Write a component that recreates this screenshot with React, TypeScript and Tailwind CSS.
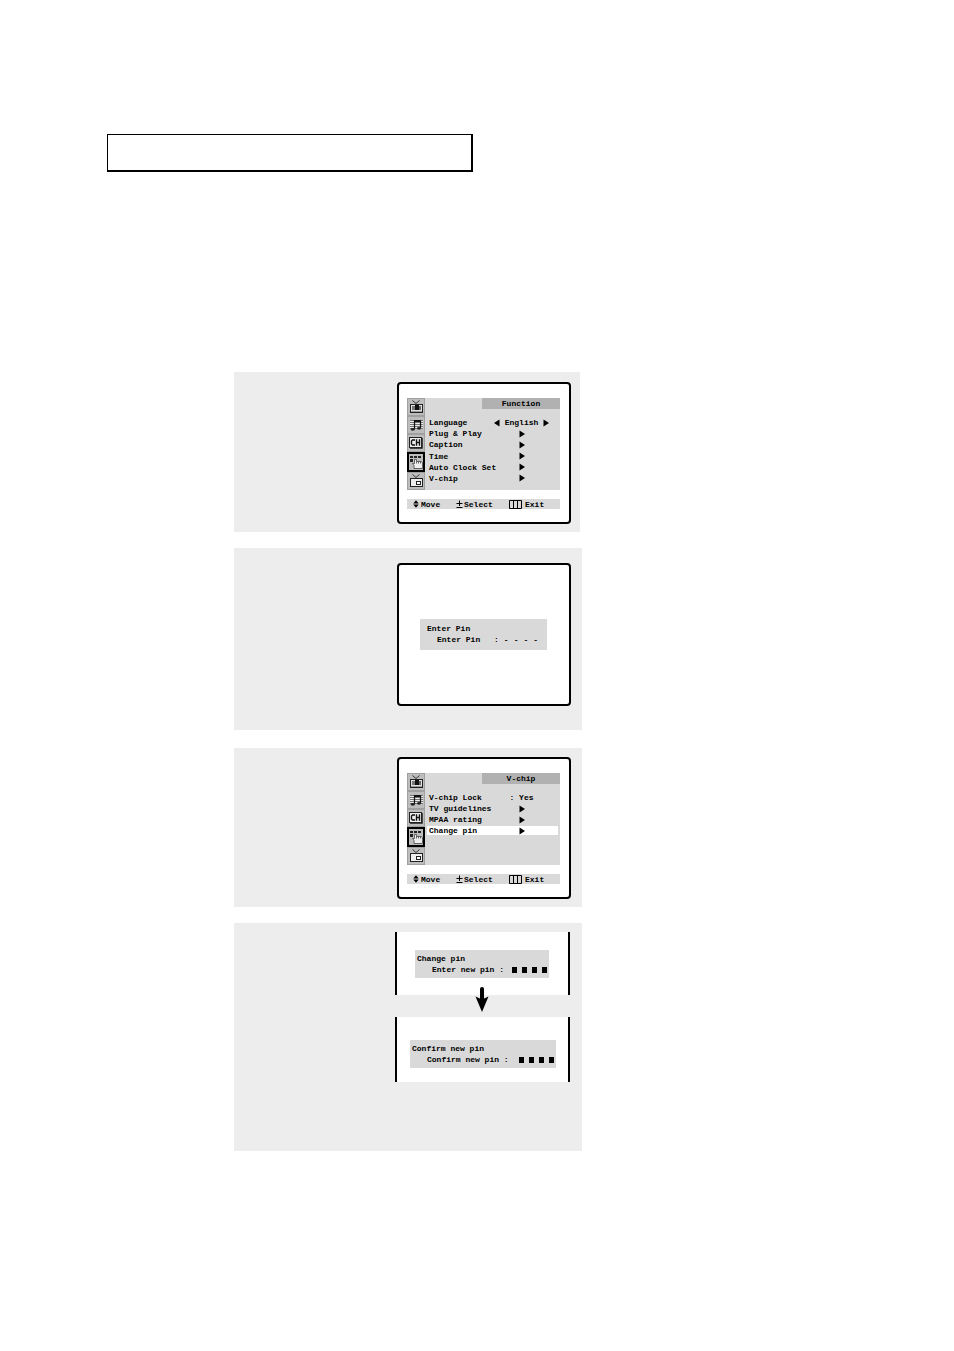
import type { ReactNode } from "react";

const TvIcon = ({ filled = false }: { filled?: boolean }) => (
  <svg viewBox="1 1 16 16" className="block size-full" aria-hidden="true">
    <path d="M5.5 2.5 L9 5.5 L12.5 2.5" fill="none" stroke="#333" strokeWidth="1" />
    {filled ? (
      <>
        <rect x="3" y="6" width="13" height="9" fill="#222" />
        <rect x="4" y="7" width="11" height="7" fill="#e2e2e2" />
        <rect x="5" y="8" width="3" height="4" fill="#777" />
        <rect x="8" y="7" width="4" height="5" fill="#111" />
        <rect x="12" y="8" width="2" height="4" fill="#666" />
        <rect x="4" y="13" width="11" height="1" fill="#999" />
      </>
    ) : (
      <>
        <rect x="3" y="6" width="13" height="9" fill="#222" />
        <rect x="4" y="7" width="11" height="7" fill="#eee" />
        <rect x="9" y="9" width="5" height="4" fill="#222" />
        <rect x="10" y="10" width="3" height="2" fill="#fff" />
      </>
    )}
  </svg>
);

const MusicIcon = () => (
  <svg viewBox="1 1 16 16" className="block size-full" aria-hidden="true">
    <rect x="3" y="4" width="13" height="9" fill="#eee" />
    <path d="M3 4.5 H16 M3 6.5 H16 M3 8.5 H16 M3 10.5 H16 M3 12.5 H16" stroke="#555" strokeWidth="0.8" />
    <path d="M7.5 13 V4.5 H13.5 V12 M7.5 5.5 H13.5" fill="none" stroke="#111" strokeWidth="1.2" />
    <ellipse cx="5.8" cy="13.3" rx="2.2" ry="1.4" fill="#222" />
    <ellipse cx="12" cy="12.3" rx="2" ry="1.4" fill="#222" />
  </svg>
);

const ChannelIcon = () => (
  <svg viewBox="1 1 16 16" className="block size-full" aria-hidden="true">
    <rect x="2.5" y="3.5" width="12" height="10" fill="#eee" stroke="#222" />
    <path d="M15.5 4 V14.5 H3" fill="none" stroke="#444" />
    <path
      d="M8 6 H5.5 L4.5 7 V10 L5.5 11 H8 M9.5 5.3 V11.7 M9.5 8.5 H12.5 M12.5 5.3 V11.7"
      fill="none"
      stroke="#111"
      strokeWidth="1.4"
    />
  </svg>
);

const HandIcon = () => (
  <svg viewBox="2 2 14 14" className="block size-full" aria-hidden="true">
    <path d="M3 3h3v2h-3z M7 3h3v2h-3z M11 3h3v2h-3z M3 6h3v3h-3z" fill="#222" />
    <path
      d="M7 15.5 V12.5 L5.5 10.5 L7.5 10.5 V6.5 H9.5 V8.5 H14 L15.5 9.5 V15.5 Z"
      fill="#eee"
      stroke="#444"
      strokeWidth="0.8"
    />
    <path d="M9.5 8.5 V10.5 M11.5 8.5 V10.5 M13.5 8.5 V10.5" stroke="#444" strokeWidth="0.8" />
  </svg>
);

const ArrowRight = () => (
  <svg viewBox="0 0 6 8" className="block h-2 w-1.5" aria-hidden="true">
    <path d="M0.5 0.5 L6 4 L0.5 7.5 Z" fill="#000" />
  </svg>
);

const ArrowLeft = () => (
  <svg viewBox="0 0 6 8" className="block h-2 w-1.5" aria-hidden="true">
    <path d="M5.5 0.5 L0 4 L5.5 7.5 Z" fill="#000" />
  </svg>
);

const tabs: { label: string; icon: ReactNode; active?: boolean }[] = [
  { label: "Picture", icon: <TvIcon filled /> },
  { label: "Sound", icon: <MusicIcon /> },
  { label: "Channel", icon: <ChannelIcon /> },
  { label: "Function", icon: <HandIcon />, active: true },
  { label: "PIP", icon: <TvIcon /> },
];

const Tabs = () => (
  <nav className="flex w-[18px] shrink-0 flex-col bg-[#b8b8b8]">
    {tabs.map((tab) => (
      <button
        key={tab.label}
        type="button"
        aria-label={tab.label}
        className={
          tab.active
            ? "min-h-0 flex-1 border-2 border-black bg-[#bdbdbd]"
            : "min-h-0 flex-1 border border-[#a0a0a0] bg-[#bdbdbd]"
        }
      >
        {tab.icon}
      </button>
    ))}
  </nav>
);

const Footer = () => (
  <footer className="mt-[9px] flex h-[10px] items-center bg-[#d9d9d9] pl-1.5">
    <span className="flex w-[43px] items-center gap-0.5">
      <svg viewBox="0 0 6 8" className="block h-2 w-1.5" aria-hidden="true">
        <path d="M0.3 3.4 L3 0.3 L5.7 3.4 Z M0.3 4.6 L3 7.7 L5.7 4.6 Z" fill="#000" />
      </svg>
      Move
    </span>
    <span className="flex w-[53px] items-center gap-px">
      <svg viewBox="0 0 7 8" className="block h-2 w-[7px]" aria-hidden="true">
        <path d="M3.5 0.5 V6 M0.5 3.5 H6.5 M0.5 7.5 H6.5" stroke="#000" />
      </svg>
      Select
    </span>
    <span className="flex items-center gap-[3px]">
      <svg viewBox="0 0 13 9" className="block h-[9px] w-[13px]" aria-hidden="true">
        <path d="M0.5 0.5 H12.5 V8.5 H0.5 Z M4.5 0.5 V8.5 M8.5 0.5 V8.5" fill="none" stroke="#000" />
      </svg>
      Exit
    </span>
  </footer>
);

type Item = { label: string; value?: ReactNode; selected?: boolean };

const MenuScreen = ({ title, items, listClass }: { title: string; items: Item[]; listClass: string }) => (
  <div className="h-[142px] w-[174px] rounded-[4px] border-2 border-black bg-white pt-[14px] pr-[9px] pl-2">
    <div className="flex h-[92px] bg-[#d9d9d9]">
      <Tabs />
      <div className="flex flex-1 flex-col">
        <h2 className="ml-auto w-[78px] bg-[#b1b1b1] text-center leading-[11px]">{title}</h2>
        <ul className={listClass}>
          {items.map((item) => (
            <li
              key={item.label}
              className={
                item.selected
                  ? "grid h-[9px] grid-cols-[56px_1fr] items-center bg-white pl-0.5"
                  : "grid h-[9px] grid-cols-[56px_1fr] items-center pl-0.5"
              }
            >
              <button type="button" className="text-left whitespace-nowrap">
                {item.label}
              </button>
              <span className="flex items-center justify-center">{item.value ?? <ArrowRight />}</span>
            </li>
          ))}
        </ul>
      </div>
    </div>
    <Footer />
  </div>
);

const functionItems: Item[] = [
  {
    label: "Language",
    value: (
      <span className="flex items-center gap-[5px]">
        <button type="button" aria-label="Previous language">
          <ArrowLeft />
        </button>
        English
        <button type="button" aria-label="Next language">
          <ArrowRight />
        </button>
      </span>
    ),
  },
  { label: "Plug & Play" },
  { label: "Caption" },
  { label: "Time" },
  { label: "Auto Clock Set" },
  { label: "V-chip" },
];

const chipItems: Item[] = [
  { label: "V-chip Lock", value: ": Yes" },
  { label: "TV guidelines" },
  { label: "MPAA rating" },
  { label: "Change pin", selected: true },
];

const PinDots = () => (
  <span className="flex gap-[5px]">
    {[0, 1, 2, 3].map((n) => (
      <span key={n} className="h-1.5 w-[5px] bg-black" />
    ))}
  </span>
);

type StripProps = { title: string; prompt: string; stripClass: string };

const PinStrip = ({ title, prompt, stripClass }: StripProps) => (
  <div className={stripClass}>
    <div className="h-7 bg-[#d9d9d9] pt-[3px] pr-0.5 pl-0.5">
      <h2>{title}</h2>
      <p className="flex items-center justify-between pl-[15px] whitespace-nowrap">
        {prompt}
        <PinDots />
      </p>
    </div>
  </div>
);

export default function App() {
  return (
    <main className="min-h-screen bg-white pt-[134px] pb-[200px] font-['Liberation_Mono',monospace] text-[8px] leading-[9px] font-bold text-black">
      <div className="ml-[107px] h-[38px] max-w-[366px] border-t border-r-2 border-b-2 border-l border-black" />

      <div className="mt-[200px] ml-[234px] flex max-w-[348px] flex-col">
        <section className="mr-0.5 flex h-[160px] justify-end bg-[#ededed] pt-[10px] pr-[9px]">
          <MenuScreen
            title="Function"
            items={functionItems}
            listClass="mr-0.5 ml-0.5 mt-[9px] flex h-[65px] flex-col justify-between"
          />
        </section>

        <section className="mt-4 flex h-[182px] justify-end bg-[#ededed] pt-[15px] pr-[11px]">
          <div className="h-[143px] w-[174px] rounded-[4px] border-2 border-black bg-white pt-[54px]">
            <div className="mr-[22px] ml-[21px] h-[31px] bg-[#d9d9d9] pt-1 pl-[7px] leading-[11px]">
              <h2>Enter Pin</h2>
              <p className="flex pl-[10px]">
                <span className="w-[57px]">Enter Pin</span>
                <span className="flex gap-[5px]">
                  <span>:</span>
                  <span>-</span>
                  <span>-</span>
                  <span>-</span>
                  <span>-</span>
                </span>
              </p>
            </div>
          </div>
        </section>

        <section className="mt-[18px] flex h-[159px] justify-end bg-[#ededed] pt-[9px] pr-[11px]">
          <MenuScreen
            title="V-chip"
            items={chipItems}
            listClass="mr-0.5 ml-0.5 mt-[9px] flex h-[42px] flex-col justify-between"
          />
        </section>

        <section className="mt-4 flex h-[228px] justify-end bg-[#ededed] pt-[9px] pr-3">
          <div className="relative flex w-[175px] flex-col gap-[22px] leading-[11px]">
            <PinStrip
              title="Change pin"
              prompt="Enter new pin :"
              stripClass="border-x-2 border-black bg-white pt-[18px] pr-[19px] pb-[17px] pl-[18px]"
            />
            <PinStrip
              title="Confirm new pin"
              prompt="Confirm new pin :"
              stripClass="border-x-2 border-black bg-white pt-[23px] pr-3 pb-[14px] pl-[13px]"
            />
            <svg
              viewBox="0 0 14 26"
              className="absolute top-[55px] left-[80px] h-[26px] w-[14px]"
              aria-hidden="true"
            >
              <path d="M7 2 V14" stroke="#000" strokeWidth="4" strokeLinecap="round" />
              <path d="M0.5 9.5 L7 12.5 L13.5 9.5 L7 25 Z" fill="#000" />
            </svg>
          </div>
        </section>
      </div>
    </main>
  );
}
